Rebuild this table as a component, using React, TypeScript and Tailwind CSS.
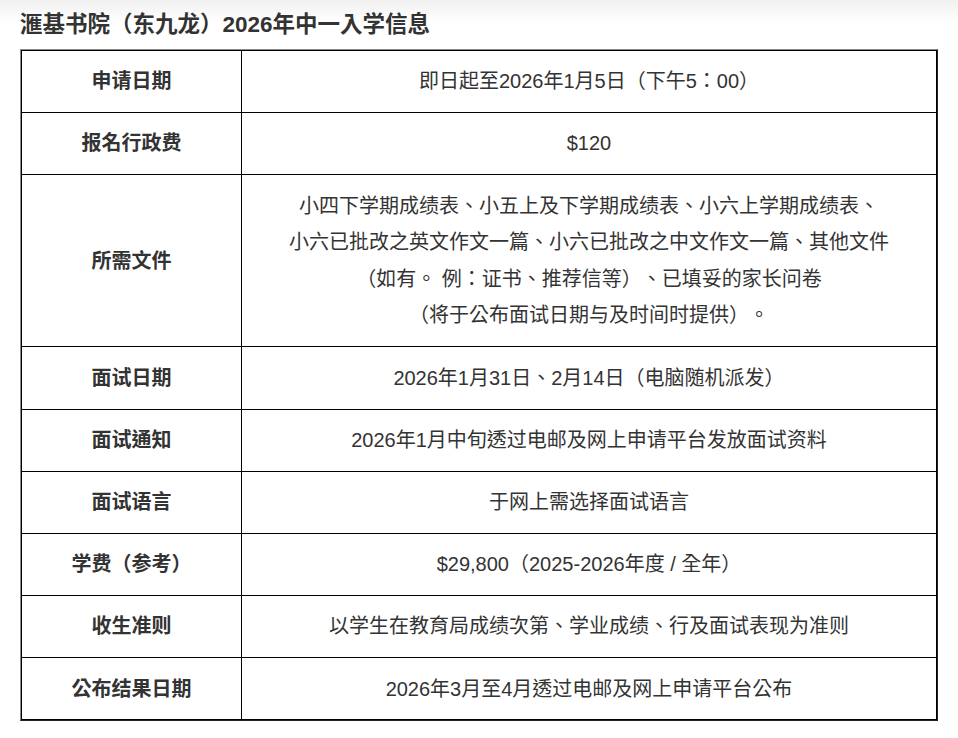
const rows: { label: string; lines: string[] }[] = [
  { label: "申请日期", lines: ["即日起至2026年1月5日（下午5：00）"] },
  { label: "报名行政费", lines: ["$120"] },
  {
    label: "所需文件",
    lines: [
      "小四下学期成绩表、小五上及下学期成绩表、小六上学期成绩表、",
      "小六已批改之英文作文一篇、小六已批改之中文作文一篇、其他文件",
      "（如有。 例：证书、推荐信等）、已填妥的家长问卷",
      "（将于公布面试日期与及时间时提供）。",
    ],
  },
  { label: "面试日期", lines: ["2026年1月31日、2月14日（电脑随机派发）"] },
  { label: "面试通知", lines: ["2026年1月中旬透过电邮及网上申请平台发放面试资料"] },
  { label: "面试语言", lines: ["于网上需选择面试语言"] },
  { label: "学费（参考）", lines: ["$29,800（2025-2026年度 / 全年）"] },
  { label: "收生准则", lines: ["以学生在教育局成绩次第、学业成绩、行及面试表现为准则"] },
  { label: "公布结果日期", lines: ["2026年3月至4月透过电邮及网上申请平台公布"] },
];

export default function App() {
  return (
    <div
      className="min-h-screen bg-[linear-gradient(to_bottom,#f0f0f0,#ffffff_22px)] px-5 pt-3 text-[#333] [text-spacing-trim:space-all] [font-feature-settings:'chws'_0,'halt'_0,'palt'_0]"
      style={{ fontFamily: '"Liberation Sans", Arial, "Noto Sans CJK TC", sans-serif' }}
    >
      <h1 className="text-[22.5px] font-bold leading-[26px] mb-[11px]">滙基书院（东九龙）2026年中一入学信息</h1>

      {/* table, old-style outset border */}
      <div className="w-[918px] border border-t-[#8a8a8a] border-l-[#8a8a8a] border-r-[#222] border-b-[#222]">
        <table className="w-full border-collapse text-[20px]">
          <tbody>
            {rows.map((r) => (
              <tr key={r.label}>
                <td className="w-[220px] border border-black py-[12.3px] text-center font-bold leading-[36.6px]">
                  {r.label}
                </td>
                <td className="border border-black py-[12.3px] text-center leading-[36.6px]">
                  {r.lines.map((l, i) => (
                    <div key={i}>{l}</div>
                  ))}
                </td>
              </tr>
            ))}
          </tbody>
        </table>
      </div>
    </div>
  );
}
